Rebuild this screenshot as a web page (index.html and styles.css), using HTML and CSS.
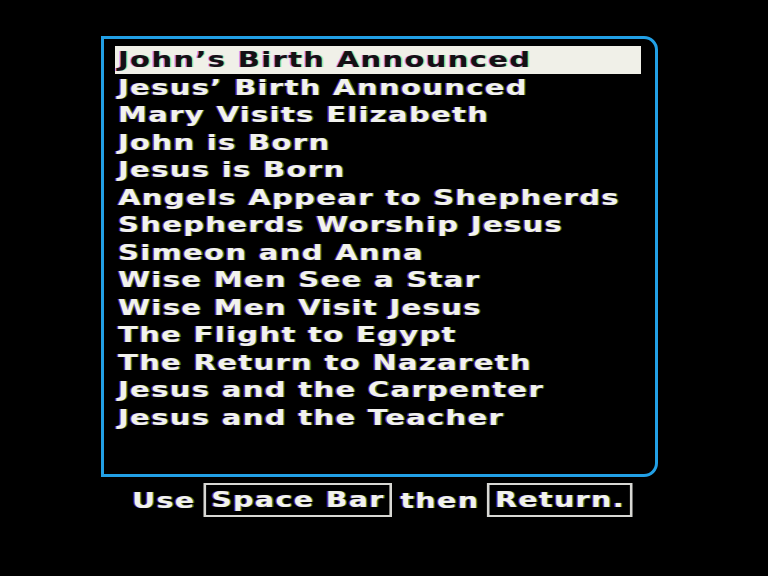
FILE: index.html
```html
<!DOCTYPE html>
<html lang="en">
<head>
    <meta charset="UTF-8">
    <title>Story Menu</title>
    <link rel="stylesheet" href="styles.css">
</head>
<body>

    <div class="menu-box">
        <ul class="story-list">
            <li class="selected"><span>John’s Birth Announced</span></li>
            <li><span>Jesus’ Birth Announced</span></li>
            <li><span>Mary Visits Elizabeth</span></li>
            <li><span>John is Born</span></li>
            <li><span>Jesus is Born</span></li>
            <li><span>Angels Appear to Shepherds</span></li>
            <li><span>Shepherds Worship Jesus</span></li>
            <li><span>Simeon and Anna</span></li>
            <li><span>Wise Men See a Star</span></li>
            <li><span>Wise Men Visit Jesus</span></li>
            <li><span>The Flight to Egypt</span></li>
            <li><span>The Return to Nazareth</span></li>
            <li><span>Jesus and the Carpenter</span></li>
            <li><span>Jesus and the Teacher</span></li>
        </ul>
    </div>

    <!-- keyboard hint -->
    <div class="hint">
        <span>Use</span>
        <span class="key">Space Bar</span>
        <span>then</span>
        <span class="key">Return.</span>
    </div>

</body>
</html>
```

FILE: styles.css
```css
body {
    margin: 0;
    background-color: #000;
    color: #f2f2ee;
    font-family: "DejaVu Sans", Verdana, sans-serif;
    font-weight: bold;
    font-size: 22px;
    letter-spacing: 1px;
    text-shadow: -1px 0 rgba(170, 70, 255, 0.6), 1px 0 rgba(110, 230, 60, 0.5);
}
.menu-box {
    box-sizing: border-box;
    width: 557px;
    height: 441px;
    margin: 36px 0 0 101px;
    padding: 7px 14px 0 11px;
    border: 3px solid #22a0e6;
    border-radius: 0 14px 14px 0;
}
.story-list {
    list-style: none;
    margin: 0;
    padding: 0;
}
.story-list li {
    height: 27.5px;
    line-height: 27.5px;
    padding-left: 3px;
    white-space: nowrap;
}
.story-list li span {
    display: inline-block;
    transform: scaleX(1.32);
    transform-origin: left center;
}
.story-list li.selected {
    background-color: #f0f0e8;
    color: #141014;
}
.hint {
    display: flex;
    align-items: center;
    gap: 6px;
    width: max-content;
    height: 34px;
    margin: 6px 0 0 132px;
    white-space: nowrap;
    transform: scaleX(1.3);
    transform-origin: left center;
}
.key {
    box-sizing: border-box;
    height: 34px;
    line-height: 30px;
    padding: 0 4px;
    border: 2px solid #d8d8d4;
}
```
